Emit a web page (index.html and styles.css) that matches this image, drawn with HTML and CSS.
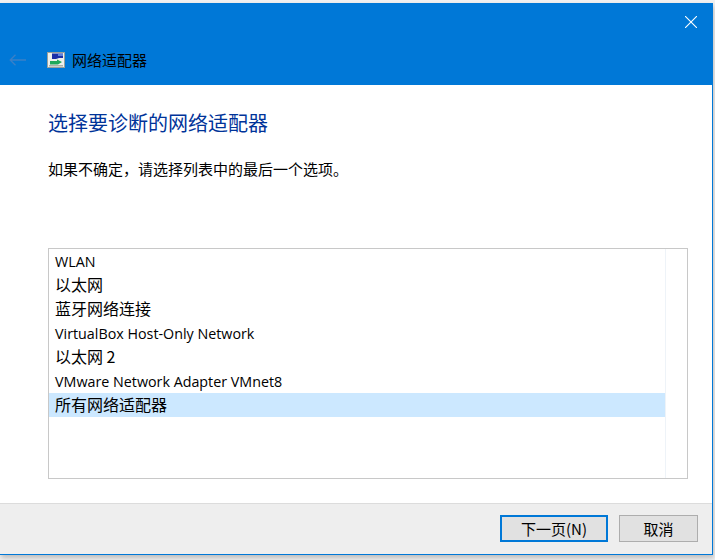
FILE: index.html
```html
<!DOCTYPE html>
<html lang="zh-CN">
<head>
<meta charset="utf-8">
<title>网络适配器</title>
<link rel="stylesheet" href="styles.css">
</head>
<body>
<div class="window">
  <header class="titlebar">
    <div class="closerow">
      <svg class="close" width="12" height="12" viewBox="0 0 12 12"><path d="M0 0L12 12M12 0L0 12" stroke="#fff" stroke-width="1.1" fill="none"/></svg>
    </div>
    <div class="navrow">
      <svg class="back" width="18" height="12" viewBox="0 0 18 12"><path d="M1 6H17M6.5 .8L1.2 6l5.3 5.2" stroke="#3a80c8" stroke-width="1.3" fill="none"/></svg>
      <svg class="appicon" width="18" height="16" viewBox="0 0 18 16">
        <rect x=".5" y=".5" width="17" height="15" fill="#eef0ec" stroke="#9aa09c"/>
        <path d="M5 1.5H16V6H12L9 7H5z" fill="#1c2fa8"/>
        <rect x="11" y="2" width="5" height="2" fill="#5f82dc"/>
        <path d="M3 9H10V7.5L15 10l-4 2.5H3z" fill="#1fa85a"/>
        <rect x="2" y="13" width="14" height="1.5" fill="#aab0aa"/>
      </svg>
      <span class="apptitle">网络适配器</span>
    </div>
  </header>
  <main class="content">
    <h1 class="heading">选择要诊断的网络适配器</h1>
    <p class="hint">如果不确定，请选择列表中的最后一个选项。</p>
    <div class="listbox">
      <ul class="items">
        <li class="item latin">WLAN</li>
        <li class="item">以太网</li>
        <li class="item">蓝牙网络连接</li>
        <li class="item latin">VirtualBox Host-Only Network</li>
        <li class="item">以太网 2</li>
        <li class="item latin">VMware Network Adapter VMnet8</li>
        <li class="item selected">所有网络适配器</li>
      </ul>
      <div class="scrolltrack"></div>
    </div>
  </main>
  <footer class="footer">
    <button class="btn primary" type="button">下一页(N)</button>
    <button class="btn cancel" type="button">取消</button>
  </footer>
</div>
</body>
</html>
```
FILE: styles.css
```css
* { box-sizing: border-box; }
html, body { margin: 0; padding: 0; }
body {
  width: 715px;
  height: 560px;
  overflow: hidden;
  background: #f1f1f1;
  font-family: "Noto Sans CJK SC", "Liberation Sans", sans-serif;
  padding-top: 3px;
}
.window {
  width: 713px;
  height: 552px;
  background: #fff;
  border-right: 1px solid #0078d7;
  border-bottom: 1px solid #0078d7;
  box-shadow: 1px 3px 5px rgba(0, 0, 0, .22);
  display: flex;
  flex-direction: column;
}
.titlebar {
  height: 82px;
  background: #0078d7;
  flex: none;
}
.closerow {
  height: 37px;
  display: flex;
  justify-content: flex-end;
  padding: 13px 15px 0 0;
}
.close { display: block; }
.navrow {
  display: flex;
  align-items: center;
  height: 40px;
  padding-left: 9px;
}
.back { flex: none; }
.appicon { flex: none; margin-left: 20px; }
.apptitle {
  margin-left: 7px;
  font-size: 15px;
  line-height: 20px;
  color: #000;
}
.content {
  flex: 1;
  padding: 25px 24px 0 48px;
}
.heading {
  margin: 0;
  font-size: 20px;
  line-height: 26px;
  font-weight: 400;
  color: #003399;
}
.hint {
  margin: 23px 0 0;
  font-size: 15px;
  line-height: 20px;
  color: #000;
}
.listbox {
  margin-top: 69px;
  width: 640px;
  height: 231px;
  border: 1px solid #c8c8c8;
  display: flex;
}
.items {
  list-style: none;
  margin: 0;
  padding: 0;
  flex: 1;
}
.item {
  height: 24px;
  line-height: 22px;
  padding-left: 6px;
  font-size: 16px;
  color: #000;
  white-space: nowrap;
}
.latin {
  line-height: 26px;
  font-family: "Open Sans", "Liberation Sans", sans-serif;
  font-size: 14.3px;
}
.selected { background: #cce8ff; }
.scrolltrack {
  width: 22px;
  flex: none;
  border-left: 1px solid #eef3f8;
}
.footer {
  height: 51px;
  flex: none;
  background: #eeeeee;
  border-top: 1px solid #dcdcdc;
  display: flex;
  gap: 11px;
  padding: 11px 0 0 500px;
}
.btn {
  height: 27px;
  padding: 0;
  background: #e1e1e1;
  color: #000;
  font-family: inherit;
  font-size: 15px;
  line-height: 20px;
}
.primary { width: 108px; border: 2px solid #0078d7; }
.cancel { width: 79px; border: 1px solid #adadad; }
```
